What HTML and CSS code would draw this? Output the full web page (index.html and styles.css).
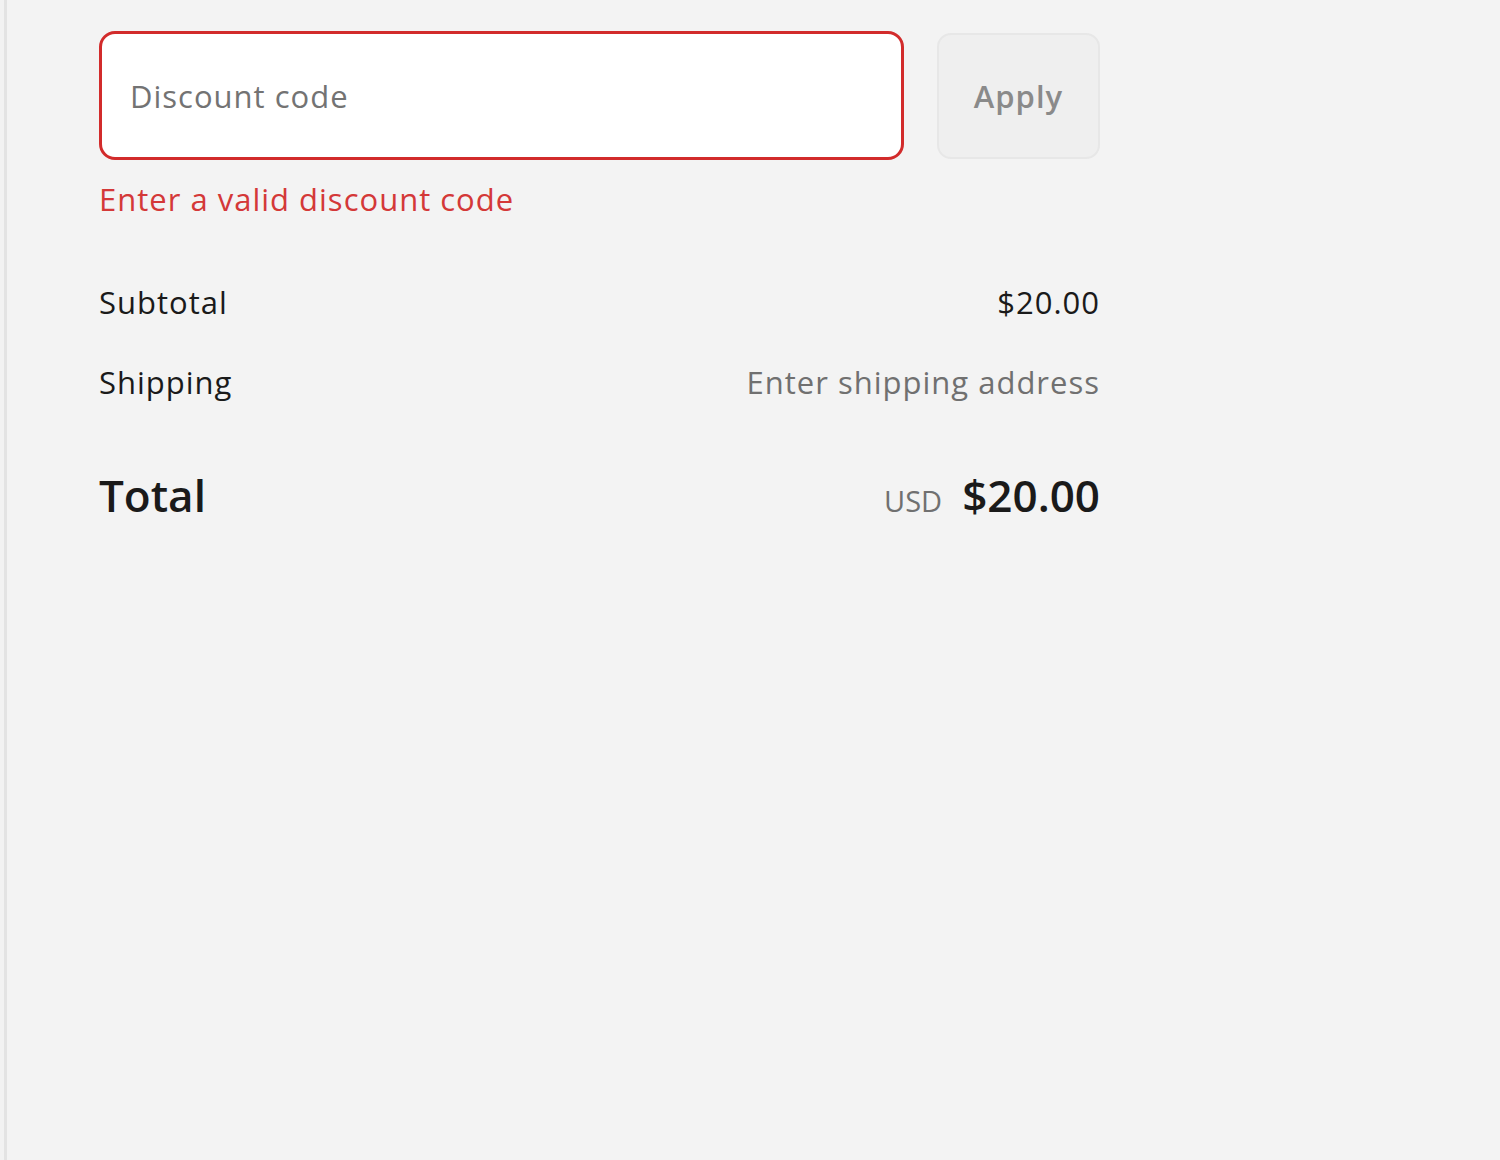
FILE: index.html
```html
<!DOCTYPE html>
<html>

<head>
  <link rel="stylesheet" href="styles.css">
</head>

<body>
  <div class="summary">
    <div class="discount">
      <div class="field">
        <input class="field-input" type="text" placeholder="Discount code">
        <p class="field-error">Enter a valid discount code</p>
      </div>
      <button class="apply" disabled>Apply</button>
    </div>

    <div class="lines">
      <div class="line">
        <span>Subtotal</span>
        <span class="amount">$20.00</span>
      </div>
      <div class="line">
        <span>Shipping</span>
        <span class="muted">Enter shipping address</span>
      </div>
      <div class="line total">
        <span>Total</span>
        <span class="total-amount"><small>USD</small>$20.00</span>
      </div>
    </div>
  </div>
</body>

</html>
```

FILE: styles.css
```css
* {
  margin: 0;
  padding: 0;
  box-sizing: border-box;
}

html,
body {
  width: 100%;
  height: 100%;
}

body {
  background: #f2f2f2;
  font-family: "Open Sans", "Noto Sans", sans-serif;
  font-size: 31px;
  letter-spacing: 1px;
  color: #1a1a1a;
  padding-left: 4px;
}

.summary {
  height: 100%;
  border-left: 3px solid #e3e3e3;
  background: #f3f3f3;
  padding: 31px 0 0 92px;
}

.discount {
  display: flex;
  gap: 33px;
  width: 1001px;
}

.field {
  flex: 1;
}

.field-input {
  display: block;
  width: 100%;
  height: 129px;
  border: 3px solid #d22b2b;
  border-radius: 16px;
  background: #fff;
  padding: 0 28px;
  font: inherit;
  letter-spacing: inherit;
  color: #1a1a1a;
  outline: none;
}

.field-input::placeholder {
  color: #737373;
}

.field-error {
  margin-top: 19px;
  color: #d43838;
  line-height: 40px;
}

.apply {
  width: 163px;
  height: 126px;
  margin-top: 2px;
  border: 2px solid #e7e7e7;
  border-radius: 14px;
  background: #efefef;
  font: inherit;
  font-weight: 600;
  letter-spacing: inherit;
  color: #8a8a8a;
}

.lines {
  width: 1001px;
  margin-top: 63px;
}

.line {
  display: flex;
  justify-content: space-between;
  align-items: baseline;
  line-height: 40px;
  margin-bottom: 40px;
}

.line .muted {
  color: #707070;
}

.line.total {
  margin-top: 66px;
  font-size: 44px;
  font-weight: 600;
  letter-spacing: 0;
  line-height: 54px;
}

.total-amount small {
  font-size: 29px;
  font-weight: 400;
  color: #707070;
  margin-right: 20px;
}
```
